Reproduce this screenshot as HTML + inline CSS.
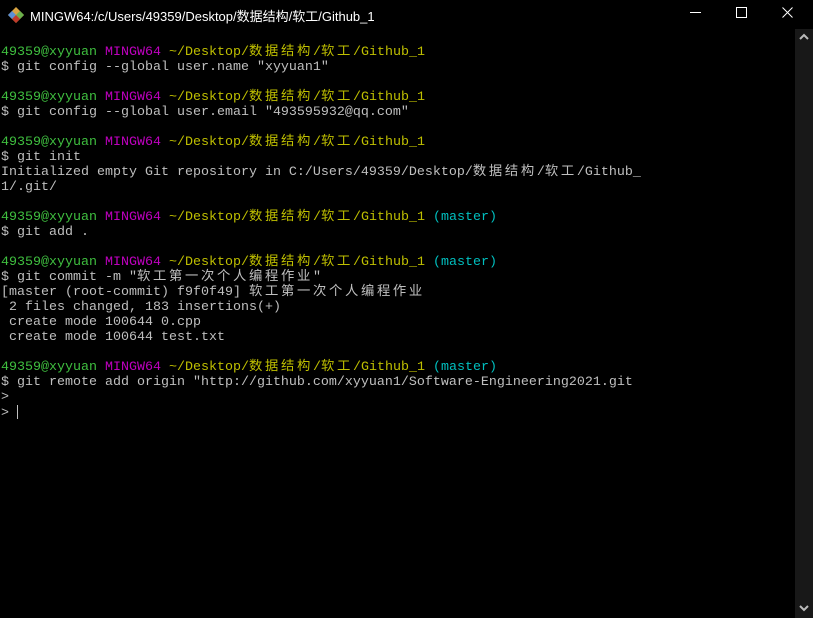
<!DOCTYPE html>
<html><head><meta charset="utf-8"><style>
html,body{margin:0;padding:0;background:#000;width:813px;height:618px;overflow:hidden}
.title{position:absolute;left:0;top:0;width:813px;height:29px;background:#000;color:#fff;font-family:"Liberation Sans","Noto Sans CJK SC",sans-serif;font-size:13px}
.title .t{position:absolute;left:30px;top:6px}
.term{position:absolute;left:1px;top:45px;font-family:"Liberation Mono","Noto Sans CJK SC",monospace;font-size:13.33px;line-height:15px;color:#bfbfbf;white-space:pre}
.k{letter-spacing:2.67px}
.g{color:#3fbf3f}.m{color:#bf00bf}.y{color:#bfbf00}.c{color:#00bfbf}
.sb{position:absolute;left:795px;top:29px;width:18px;height:589px;background:#181818}
.cur{display:inline-block;width:1px;height:14px;background:#bfbfbf;vertical-align:-3px}
</style></head><body>
<div class="title">
<svg style="position:absolute;left:8px;top:7px" width="16" height="16" viewBox="0 0 16 16">
<polygon points="8,0 16,8 8,16 0,8" fill="#d9a441"/>
<polygon points="4,4 8,8 4,12 0,8" fill="#5b8fd6"/>
<polygon points="12,4 16,8 12,12 8,8" fill="#6ab04c"/>
<polygon points="8,8 12,12 8,16 4,12" fill="#c0392b"/>
</svg>
<span class="t">MINGW64:/c/Users/49359/Desktop/数据结构/软工/Github_1</span>
<svg style="position:absolute;left:690px;top:12px" width="12" height="2"><rect width="11" height="1" fill="#fff"/></svg>
<svg style="position:absolute;left:736px;top:7px" width="12" height="12"><rect x="0.5" y="0.5" width="10" height="10" fill="none" stroke="#fff"/></svg>
<svg style="position:absolute;left:782px;top:7px" width="12" height="12"><path d="M0.5 0.5L10.5 10.5M10.5 0.5L0.5 10.5" stroke="#fff"/></svg>
</div>
<div class="sb"></div>
<svg style="position:absolute;left:798px;top:33px" width="12" height="8"><path d="M2 6L6 2L10 6" stroke="#bbb" stroke-width="2" fill="none"/></svg>
<svg style="position:absolute;left:798px;top:604px" width="12" height="8"><path d="M2 2L6 6L10 2" stroke="#bbb" stroke-width="2" fill="none"/></svg>
<div class="term"><span class="g">49359@xyyuan</span> <span class="m">MINGW64</span> <span class="y">~/Desktop/<span class="k">数据结构</span>/<span class="k">软工</span>/Github_1</span>
$ git config --global user.name "xyyuan1"

<span class="g">49359@xyyuan</span> <span class="m">MINGW64</span> <span class="y">~/Desktop/<span class="k">数据结构</span>/<span class="k">软工</span>/Github_1</span>
$ git config --global user.email "493595932@qq.com"

<span class="g">49359@xyyuan</span> <span class="m">MINGW64</span> <span class="y">~/Desktop/<span class="k">数据结构</span>/<span class="k">软工</span>/Github_1</span>
$ git init
Initialized empty Git repository in C:/Users/49359/Desktop/<span class="k">数据结构</span>/<span class="k">软工</span>/Github_
1/.git/

<span class="g">49359@xyyuan</span> <span class="m">MINGW64</span> <span class="y">~/Desktop/<span class="k">数据结构</span>/<span class="k">软工</span>/Github_1</span> <span class="c">(master)</span>
$ git add .

<span class="g">49359@xyyuan</span> <span class="m">MINGW64</span> <span class="y">~/Desktop/<span class="k">数据结构</span>/<span class="k">软工</span>/Github_1</span> <span class="c">(master)</span>
$ git commit -m "<span class="k">软工第一次个人编程作业</span>"
[master (root-commit) f9f0f49] <span class="k">软工第一次个人编程作业</span>
 2 files changed, 183 insertions(+)
 create mode 100644 0.cpp
 create mode 100644 test.txt

<span class="g">49359@xyyuan</span> <span class="m">MINGW64</span> <span class="y">~/Desktop/<span class="k">数据结构</span>/<span class="k">软工</span>/Github_1</span> <span class="c">(master)</span>
$ git remote add origin "http://github.com/xyyuan1/Software-Engineering2021.git
&gt;
&gt; <span class="cur"></span></div>
</body></html>
